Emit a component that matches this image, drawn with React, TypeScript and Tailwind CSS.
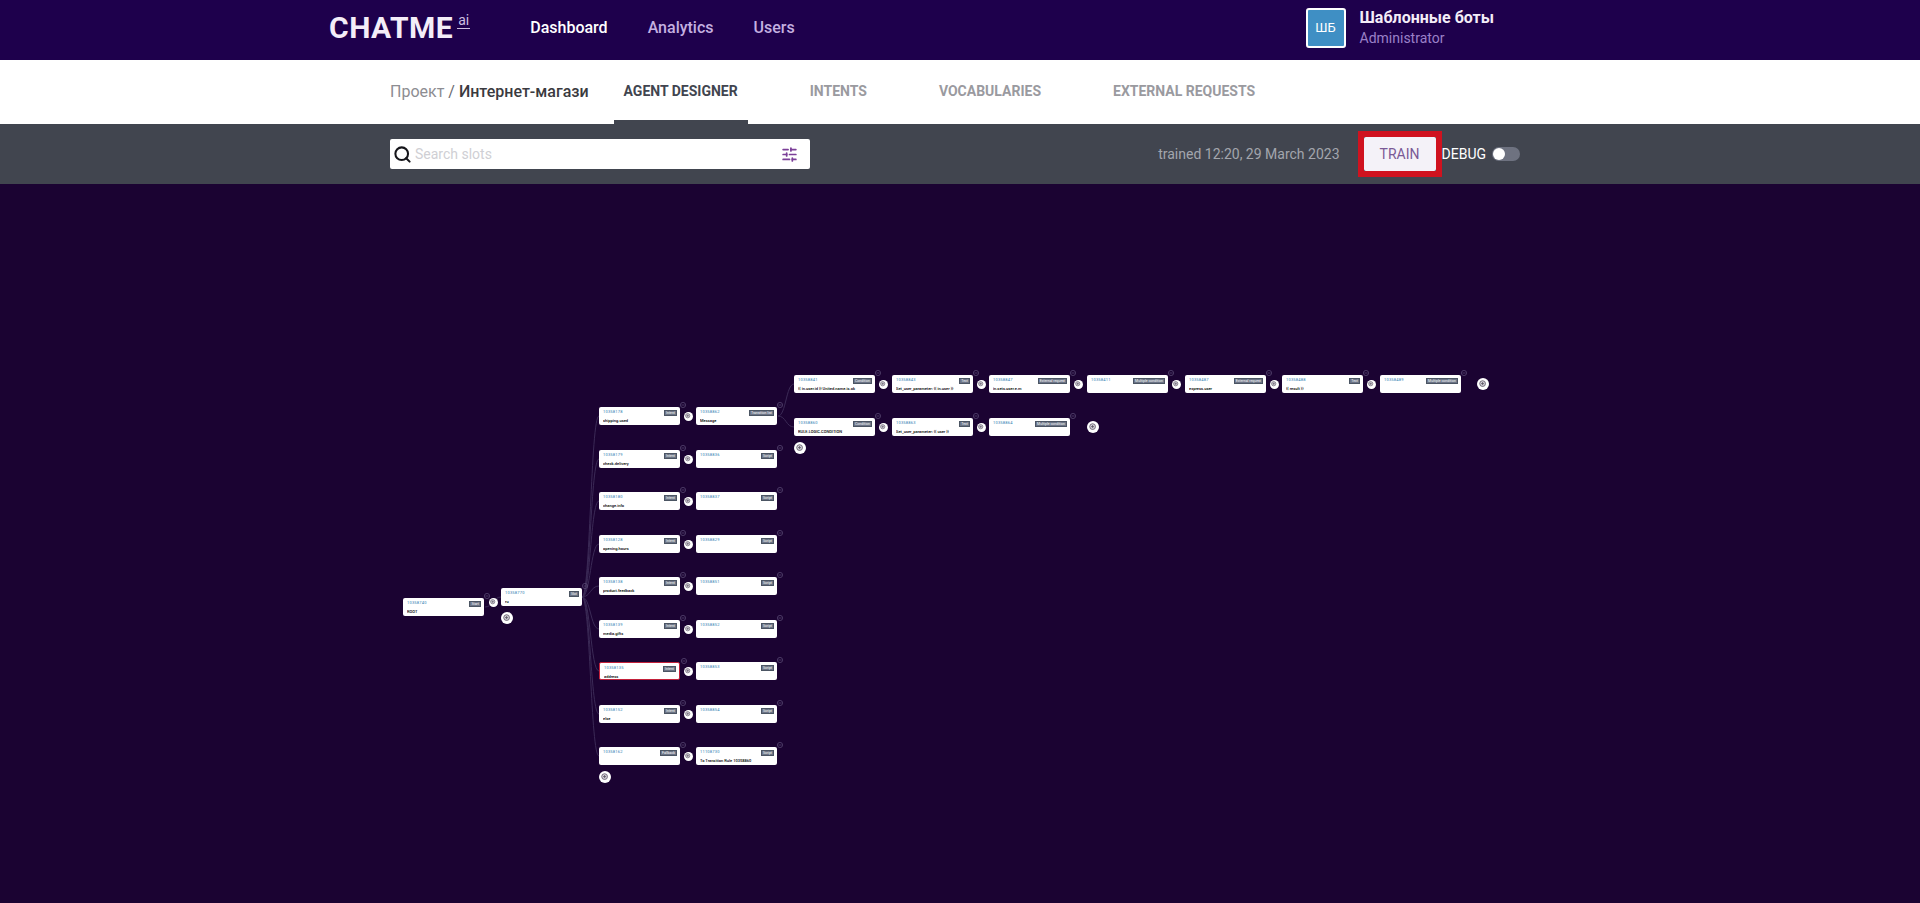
import { Search, SlidersHorizontal } from "lucide-react";

const ROOT_TOP = 184;

type FlowNode = {
  id: string;
  x: number;
  y: number;
  badge: string;
  label?: string;
  active?: boolean;
};

const COL3 = 599;
const COL4 = 696;

const nodes: FlowNode[] = [
  { id: "10358740", x: 403, y: 598, badge: "Start", label: "ROOT" },
  { id: "10358770", x: 501, y: 588, badge: "Slot", label: "ru" },

  { id: "10358178", x: COL3, y: 407, badge: "Intent", label: "shipping.used" },
  { id: "10358179", x: COL3, y: 450, badge: "Intent", label: "check.delivery" },
  { id: "10358180", x: COL3, y: 492, badge: "Intent", label: "change.info" },
  { id: "10358128", x: COL3, y: 535, badge: "Intent", label: "opening.hours" },
  { id: "10358138", x: COL3, y: 577, badge: "Intent", label: "product.feedback" },
  { id: "10358139", x: COL3, y: 620, badge: "Intent", label: "media.gifts" },
  { id: "10358135", x: COL3, y: 662, badge: "Intent", label: "address", active: true },
  { id: "10358152", x: COL3, y: 705, badge: "Intent", label: "else" },
  { id: "10358162", x: COL3, y: 747, badge: "Fallback" },

  { id: "10358862", x: COL4, y: 407, badge: "Transition list", label: "Message" },
  { id: "10358836", x: COL4, y: 450, badge: "Script" },
  { id: "10358837", x: COL4, y: 492, badge: "Script" },
  { id: "10358829", x: COL4, y: 535, badge: "Script" },
  { id: "10358851", x: COL4, y: 577, badge: "Script" },
  { id: "10358852", x: COL4, y: 620, badge: "Script" },
  { id: "10358853", x: COL4, y: 662, badge: "Script" },
  { id: "10358854", x: COL4, y: 705, badge: "Script" },
  { id: "11108730", x: COL4, y: 747, badge: "Script", label: "To Transition Rule 10358860" },

  { id: "10358841", x: 794, y: 375, badge: "Condition", label: "{{ in.user.id }} United.name.is.ok" },
  { id: "10358843", x: 892, y: 375, badge: "Text", label: "Set_user_parameter: {{ in.user }}" },
  { id: "10358847", x: 989, y: 375, badge: "External request", label: "in.sets.user.e.m" },
  { id: "10358411", x: 1087, y: 375, badge: "Multiple condition" },
  { id: "10358487", x: 1185, y: 375, badge: "External request", label: "express.user" },
  { id: "10358488", x: 1282, y: 375, badge: "Text", label: "{{ result }}" },
  { id: "10358489", x: 1380, y: 375, badge: "Multiple condition" },

  { id: "10358860", x: 794, y: 418, badge: "Condition", label: "RULE.LOGIC.CONDITION" },
  { id: "10358863", x: 892, y: 418, badge: "Text", label: "Set_user_parameter: {{ user }}" },
  { id: "10358864", x: 989, y: 418, badge: "Multiple condition" },
];

// small + between two nodes
const smallPlus: [number, number][] = [
  [493, 602],
  ...[416, 459, 501, 544, 586, 629, 671, 714, 756].map((y) => [688, y] as [number, number]),
  [883, 384],
  [981, 384],
  [1078, 384],
  [1176, 384],
  [1274, 384],
  [1371, 384],
  [883, 427],
  [981, 427],
];

const bigPlus: [number, number][] = [
  [507, 618],
  [605, 777],
  [800, 448],
  [1093, 427],
  [1483, 384],
];

const curve = (x1: number, y1: number, x2: number, y2: number) => {
  const mid = (x1 + x2) / 2;
  return `M${x1} ${y1 - ROOT_TOP}C${mid} ${y1 - ROOT_TOP} ${mid} ${y2 - ROOT_TOP} ${x2} ${y2 - ROOT_TOP}`;
};

const edges = [
  curve(485, 607, 501, 597),
  ...[416, 459, 501, 544, 586, 629, 671, 714, 756].map((y) => curve(582, 597, COL3, y)),
  curve(778, 416, 794, 384),
  curve(778, 416, 794, 427),
];

function PlusDot({ x, y, size }: { x: number; y: number; size: number }) {
  return (
    <div
      className="absolute flex items-center justify-center rounded-full bg-white"
      style={{ left: x - size / 2, top: y - ROOT_TOP - size / 2, width: size, height: size }}
    >
      <svg viewBox="0 0 10 10" className="h-[60%] w-[60%]" fill="#d8d5dd" stroke="#57505f" strokeWidth="1.1">
        <circle cx="5" cy="5" r="4" />
        <path d="M2.8 5h4.4M5 2.8v4.4" />
      </svg>
    </div>
  );
}

function Node({ node }: { node: FlowNode }) {
  return (
    <div
      className={`absolute flex h-[18px] w-[81px] flex-col rounded-[2px] bg-white px-[4px] pt-[2px] font-['Roboto',sans-serif] ${
        node.active ? "border border-[#c3213a]" : ""
      }`}
      style={{ left: node.x, top: node.y - ROOT_TOP }}
    >
      <div className="flex items-start justify-between">
        <span className="text-[4px] leading-[6px] tracking-[0.2px] text-[#2f7db0]">{node.id}</span>
        <span className="mr-[-1px] mt-[1px] whitespace-nowrap border-[0.5px] border-[#4b5563] bg-[#6c7486] px-[1px] text-[3.5px] leading-[4px] text-white">
          {node.badge}
        </span>
      </div>
      {node.label && (
        <span className="mt-[2px] truncate text-[4px] font-medium leading-[6px] text-black">{node.label}</span>
      )}
      {/* collapse toggle */}
      <svg viewBox="0 0 6 6" className="absolute left-[81px] top-[-5px] h-[6px] w-[6px]" fill="none" stroke="#5d4f78" strokeWidth="0.7">
        <circle cx="3" cy="3" r="2.6" />
        <path d="M1.4 3h3.2" />
      </svg>
    </div>
  );
}

function Tab({ label, active }: { label: string; active?: boolean }) {
  return (
    <div
      className={`flex h-16 items-center border-b-4 px-[10px] pt-[2px] text-sm font-bold ${
        active ? "border-[#41454f] text-[#41454f]" : "border-transparent text-[#9a9a9f]"
      }`}
    >
      {label}
    </div>
  );
}

export default function App() {
  return (
    <div className="flex h-[903px] flex-col overflow-hidden bg-[#1b0332] font-['Roboto',sans-serif]">
      {/* Top nav */}
      <header className="flex h-[60px] shrink-0 items-center bg-[#1e004c] pb-[4px] pl-[329px] pr-[426px]">
        <div className="flex items-start">
          <span className="text-[30px] font-bold leading-none tracking-[0.5px] text-[#f4edf8]">CHATME</span>
          <span className="ml-[4px] border-b border-[#cdbfe0] px-[1px] text-[14px] leading-[15px] text-[#cdbfe0]">ai</span>
        </div>
        <nav className="ml-[60px] flex items-center gap-[40px] text-base font-medium">
          <span className="text-white">Dashboard</span>
          <span className="text-[#c4b0e0]">Analytics</span>
          <span className="text-[#c4b0e0]">Users</span>
        </nav>
        <div className="ml-auto flex items-center gap-[14px]">
          <div className="flex h-10 w-10 items-center justify-center rounded-[3px] border-2 border-white bg-[#3f8fc4] text-[13px] text-white">
            ШБ
          </div>
          <div>
            <div className="text-base font-bold leading-5 text-[#f4edf8]">Шаблонные боты</div>
            <div className="text-sm leading-5 text-[#9b80c8]">Administrator</div>
          </div>
        </div>
      </header>

      {/* Project tabs */}
      <div className="flex h-16 shrink-0 items-center bg-white pl-[390px]">
        <div className="whitespace-nowrap text-base text-[#8d8d92]">
          Проект <span className="text-[#6b6b70]">/</span>{" "}
          <span className="font-medium text-[#3a3a40]">Интернет-магази</span>
        </div>
        <div className="ml-[25px] flex gap-[52px]">
          <Tab label="AGENT DESIGNER" active />
          <Tab label="INTENTS" />
          <Tab label="VOCABULARIES" />
          <Tab label="EXTERNAL REQUESTS" />
        </div>
      </div>

      {/* Toolbar */}
      <div className="flex h-[60px] shrink-0 items-center bg-[#41454f] pl-[390px] pr-[400px]">
        <div className="flex h-[30px] w-[420px] items-center rounded-[2px] bg-white pl-[3px] pr-[12px]">
          <Search size={19} strokeWidth={2.6} className="text-[#15151a]" />
          <span className="ml-[3px] text-sm text-[#cfcfd4]">Search slots</span>
          <SlidersHorizontal size={17} strokeWidth={2.4} className="ml-auto text-[#7b3f98]" />
        </div>
        <span className="ml-auto text-sm text-[#a3a6ad]">trained 12:20, 29 March 2023</span>
        <div className="ml-[18px] border-[6px] border-[#d0121f]">
          <button className="flex h-[34px] w-[72px] items-center justify-center rounded-[2px] bg-[#f4f2f8] text-sm text-[#7a5a96]">
            TRAIN
          </button>
        </div>
        <span className="text-sm text-white">DEBUG</span>
        <div className="ml-[6px] flex h-[14px] w-[28px] items-center rounded-full bg-[#6e7280]">
          <span className="ml-[1px] h-[12px] w-[12px] rounded-full bg-white" />
        </div>
      </div>

      {/* Flow canvas */}
      <div className="relative min-h-0 flex-1">
        <svg className="absolute inset-0 h-full w-full" fill="none" stroke="#3b2a56" strokeWidth="1">
          {edges.map((d) => (
            <path key={d} d={d} />
          ))}
        </svg>
        {nodes.map((n) => (
          <Node key={n.id} node={n} />
        ))}
        {smallPlus.map(([x, y]) => (
          <PlusDot key={`${x}-${y}`} x={x} y={y} size={9} />
        ))}
        {bigPlus.map(([x, y]) => (
          <PlusDot key={`${x}-${y}`} x={x} y={y} size={12} />
        ))}
      </div>
    </div>
  );
}
